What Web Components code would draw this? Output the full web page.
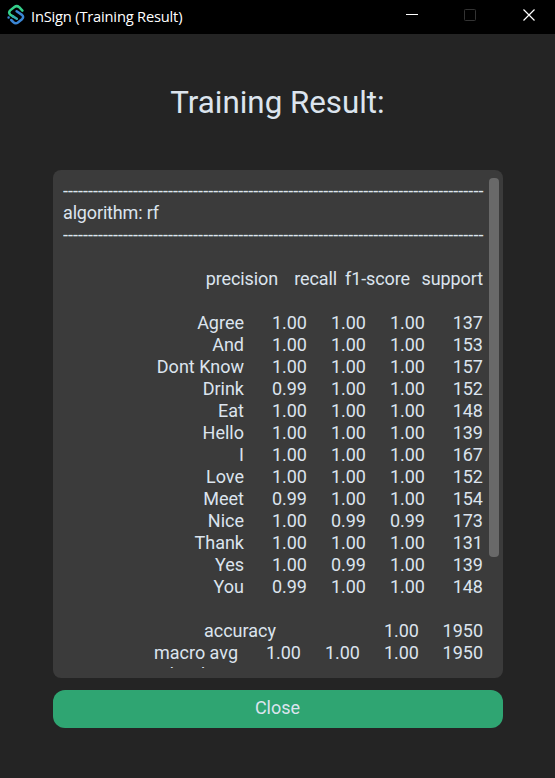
<!DOCTYPE html>
<html lang="en">
<head>
<meta charset="utf-8">
<title>InSign (Training Result)</title>
<style>
html,body{margin:0;height:100%;background:#242424}
body{overflow:hidden}
</style>
</head>
<body>
<app-window></app-window>
<script>
const define = (name, html, setup) => customElements.define(name, class extends HTMLElement {
  connectedCallback() {
    if (this.shadowRoot) return;
    this.attachShadow({mode: 'open'}).innerHTML = html;
    if (setup) setup(this, this.shadowRoot);
  }
});

define('app-logo', `<style>:host{display:block;width:20px;height:22px}svg{display:block}</style>
<svg width="20" height="22" viewBox="0 0 20 22" fill="none" stroke-width="2.5" stroke-linecap="round" stroke-linejoin="round">
<path stroke="#3b86d4" d="M2.6 13.6h.01M5.2 16 7.2 18Q9.6 20.2 11.9 18.4L16 15.2Q18.3 13 16 10.9L10.6 7.2"/>
<path stroke="#35cf8a" d="M16.4 6.6 13.2 3.2Q10.8 1.2 8.4 3L4.2 6.4Q2 8.6 4.4 10.7L7 12.4"/>
<path stroke="#36a9b0" d="M7 12.4 10.8 14.8"/>
</svg>`);

define('title-bar', `<style>
:host{display:flex;box-sizing:border-box;height:34px;background:#000;color:#fff;align-items:flex-start}
app-logo{margin:4px 5px 0 6px}
.name{flex:1;white-space:nowrap;font:14.7px/20px "Open Sans","Noto Sans",sans-serif;letter-spacing:-.2px;padding-top:6px}
.controls{display:flex;padding:9px 19px 0 0;gap:46px}
svg{display:block;width:13px;height:13px}
</style>
<app-logo></app-logo><div class="name"><slot></slot></div>
<div class="controls">
<svg viewBox="0 0 13 13"><path d="M1 5.5H13" stroke="#fff"/></svg>
<svg viewBox="0 0 13 13"><rect x=".5" y=".5" width="11" height="11" rx=".8" fill="none" stroke="#333"/></svg>
<svg viewBox="0 0 13 13"><path d="M.5.5 11.5 11.5M11.5.5.5 11.5" stroke="#fff" stroke-width="1.2"/></svg>
</div>`);

define('report-row', `<style>
:host{display:grid;height:22px;line-height:22px;white-space:nowrap;text-align:right;grid-template-columns:181px 63px 59px 59px 58px}
:host([kind=head]){grid-template-columns:0 215px 59px 73px 73px;letter-spacing:-.1px}
:host([kind=total]){grid-template-columns:213px 0 0 143px 64px}
:host([kind=avg]){grid-template-columns:175px 63px 59px 59px 64px}
:host([kind=line]){display:block;text-align:left;letter-spacing:-.15px}
:host([kind=rule]){display:block;text-align:left;letter-spacing:.03px}
</style>`, (el, root) => {
  for (const text of el.getAttribute('cells').split('|')) {
    const s = document.createElement('span');
    s.textContent = text;
    root.append(s);
  }
});

define('result-report', `<style>
:host{display:flex;box-sizing:border-box;height:508px;border-radius:8px;background:#3b3b3b;padding:8px 4px 10px 10px;justify-content:space-between}
.text{width:421px;padding-top:2px;overflow:hidden;font-size:18px}
.thumb{width:10px;height:379px;border-radius:4px;background:#696969}
</style><div class="text"></div><div class="thumb"></div>`, (el, root) => {
  const rows = [
    ['rule', '-'.repeat(84)], ['line', 'algorithm: rf'], ['rule', '-'.repeat(84)], ['line', ''],
    ['head', '|precision|recall|f1-score|support'], ['line', ''],
    ['', 'Agree|1.00|1.00|1.00|137'], ['', 'And|1.00|1.00|1.00|153'],
    ['', 'Dont Know|1.00|1.00|1.00|157'], ['', 'Drink|0.99|1.00|1.00|152'],
    ['', 'Eat|1.00|1.00|1.00|148'], ['', 'Hello|1.00|1.00|1.00|139'],
    ['', 'I|1.00|1.00|1.00|167'], ['', 'Love|1.00|1.00|1.00|152'],
    ['', 'Meet|0.99|1.00|1.00|154'], ['', 'Nice|1.00|0.99|0.99|173'],
    ['', 'Thank|1.00|1.00|1.00|131'], ['', 'Yes|1.00|0.99|1.00|139'],
    ['', 'You|0.99|1.00|1.00|148'], ['line', ''],
    ['total', 'accuracy|||1.00|1950'], ['avg', 'macro avg|1.00|1.00|1.00|1950'],
    ['avg', 'weighted avg']
  ];
  const box = root.querySelector('.text');
  for (const [kind, cells] of rows) {
    const r = document.createElement('report-row');
    r.setAttribute('kind', kind);
    r.setAttribute('cells', cells);
    box.append(r);
  }
});

define('action-button', `<style>
:host{display:block}
button{display:block;width:100%;height:38px;border:0;border-radius:12px;background:#2fa572;color:#dce4ee;font:18px/22px Roboto,sans-serif;padding:0 1px 2px 0}
</style><button><slot></slot></button>`);

define('app-window', `<style>
:host{display:flex;flex-direction:column;height:778px;background:#242424;color:#dce4ee;font-family:Roboto,sans-serif}
main{display:flex;flex-direction:column;padding:0 52px 0 53px}
h1{margin:0;padding:49px 1px 0 0;height:87px;font-weight:400;font-size:31.3px;line-height:40px;text-align:center}
action-button{margin-top:12px}
</style>
<title-bar>InSign (Training Result)</title-bar>
<main><h1>Training Result:</h1><result-report></result-report><action-button>Close</action-button></main>`);
</script>
</body>
</html>
